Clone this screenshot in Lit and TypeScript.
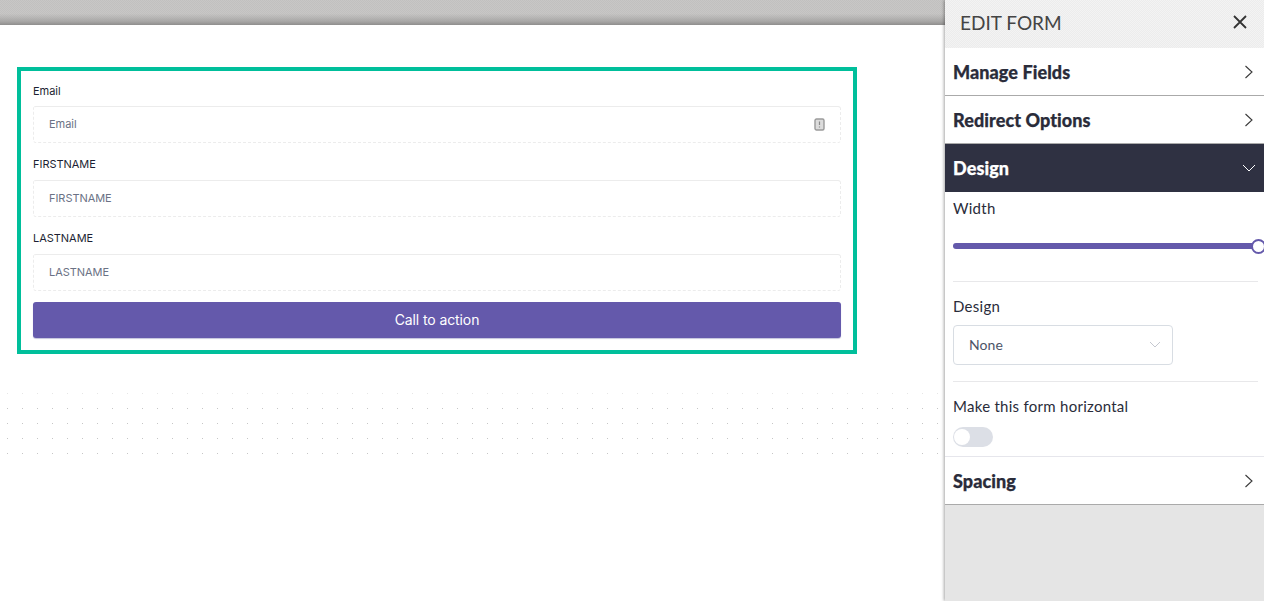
import { LitElement, html, css, svg } from "lit";
import { customElement } from "lit/decorators.js";

const chevronRight = html`<svg class="chev" width="10" height="14" viewBox="0 0 10 14"><path d="M1.5 1 L8 7 L1.5 13" fill="none" stroke="#3a3a3a" stroke-width="1.1"/></svg>`;

@customElement("app-root")
export class AppRoot extends LitElement {
  static styles = css`
    :host { display: block; width: 1264px; height: 601px; overflow: hidden; background: #fff; font-family: "Inter", "Liberation Sans", sans-serif; }
    .page { display: flex; height: 601px; }
    .main { width: 945px; flex: none; display: flex; flex-direction: column; }
    .topbar { height: 25px; flex: none; background: linear-gradient(180deg, rgba(197,196,195,0) 0, rgba(197,196,195,0) 55%, #a9a8a7 85%, #8f8e8d 100%), repeating-conic-gradient(#c8c7c6 0 25%, #c1c0bf 0 50%) 0 0 / 2px 2px; }
    .canvas { flex: 1; padding: 42px 0 0 17px; }
    .box { width: 840px; height: 287px; box-sizing: border-box; border: 4px solid #00bf9b; padding: 13px 12px 0; display: flex; flex-direction: column; }
    .label { font-size: 11px; line-height: 15px; height: 14px; flex: none; color: #1c1f33; letter-spacing: -0.03px; }
    .input { height: 37.4px; flex: none; box-sizing: border-box; margin-top: 9px; border: 1px dashed #ececec; border-top-style: solid; border-radius: 3px; padding: 0 15px 1px; display: flex; align-items: center; justify-content: space-between; font-size: 11px; color: #6b7285; letter-spacing: -0.05px; }
    .label:first-child + .input { margin-top: 8px; }
    .input + .label { margin-top: 13.4px; }
    .icon { margin-right: 0.5px; display: block; }
    .cta { margin-top: 11.5px; height: 36px; flex: none; box-sizing: border-box; padding-bottom: 2px; background: #6459ab; border-radius: 3px; box-shadow: 0 1px 1px #c3c3dc; color: #fff; font-size: 14px; letter-spacing: -0.1px; display: flex; align-items: center; justify-content: center; }
    .dots { display: block; margin: 37px 0 0 -17px; }

    .panel { width: 319px; flex: none; display: flex; flex-direction: column; background: #e5e5e5; box-shadow: -1px 0 3px rgba(0,0,0,0.35); font-family: "Lato", "Liberation Sans", sans-serif; color: #2a2c3a; position: relative; }
    .phead { height: 48px; flex: none; box-sizing: border-box; background: repeating-conic-gradient(#f3f3f3 0 25%, #ececec 0 50%) 0 0 / 2px 2px; display: flex; align-items: center; justify-content: space-between; padding: 0 16px 4px 15px; font-size: 19px; color: #444; }
    .row { height: 48px; flex: none; box-sizing: border-box; background: #fff; border-bottom: 1px solid #aaa; display: flex; align-items: center; justify-content: space-between; padding: 0 10px 0 8px; font-size: 18px; font-weight: 900; color: #2a2c3a; letter-spacing: 0.08px; -webkit-text-stroke: 0.25px currentColor; }
    .row.dark { background: #2f3142; color: #fff; border-bottom: none; padding-right: 8px; }
    .body { background: #fff; height: 265px; flex: none; box-sizing: border-box; padding: 0 6px 0 8px; display: flex; flex-direction: column; }
    .field { font-size: 15px; line-height: 17px; height: 18px; flex: none; color: #2a2c3a; letter-spacing: 0.27px; }
    .m8 { margin-top: 8px; }
    .m16 { margin-top: 16px; }
    .slider { margin-top: 25px; height: 6px; flex: none; background: #6459ab; border-radius: 3px; position: relative; margin-right: -6px; }
    .knob { position: absolute; right: -2px; top: -4.5px; width: 15px; height: 15px; box-sizing: border-box; border: 2px solid #6459ab; border-radius: 50%; background: #fff; }
    .hr { height: 1px; background: #e8e8ea; flex: none; }
    .hr.first { margin-top: 32px; }
    .select { margin-top: 9px; width: 220px; height: 40px; flex: none; box-sizing: border-box; border: 1px solid #d8dde3; border-radius: 4px; padding: 0 11px 1px 15px; display: flex; align-items: center; justify-content: space-between; font-size: 14px; color: #4d5468; letter-spacing: 0.1px; }
    .toggle { margin-top: 11px; width: 40px; height: 20px; border-radius: 10px; background: #dcdfe6; position: relative; flex: none; }
    .toggle::after { content: ""; position: absolute; left: 1px; top: 2px; width: 16px; height: 16px; border-radius: 50%; background: #fff; }
    .sectionhr { height: 1px; background: #e6e6ec; margin: 9px -6px 0 -8px; flex: none; }
  `;

  render() {
    return html`<div class="page">
      <div class="main">
        <div class="topbar"></div>
        <div class="canvas">
          <div class="box">
            <div class="label">Email</div>
            <div class="input"><span>Email</span>
              <svg class="icon" width="11" height="13" viewBox="0 0 11 13"><rect x="1" y="1" width="9" height="11" rx="1.5" fill="#dcdcdc" stroke="#9a9a9a" stroke-width="1.4"/><path d="M5.5 3.5v3.5M5.5 8.5v1" stroke="#8a8a8a" stroke-width="1.2"/></svg>
            </div>
            <div class="label">FIRSTNAME</div>
            <div class="input"><span>FIRSTNAME</span></div>
            <div class="label">LASTNAME</div>
            <div class="input"><span>LASTNAME</span></div>
            <div class="cta">Call to action</div>
          </div>
          <svg class="dots" width="944" height="70" viewBox="0 0 944 70">
            <defs>
              <pattern id="d" x="7" y="2" width="15" height="15" patternUnits="userSpaceOnUse"><rect width="1" height="1" fill="#c6c6c6"/></pattern>
              <pattern id="t" x="7" y="2" width="15" height="15" patternUnits="userSpaceOnUse"><rect width="1" height="1" fill="#e6e6e6"/></pattern>
            </defs>
            ${svg`<rect x="0" y="0" width="942" height="15" fill="url(#t)"/><rect x="0" y="15" width="942" height="55" fill="url(#d)"/>`}
          </svg>
        </div>
      </div>
      <div class="panel">
        <div class="phead"><span>EDIT FORM</span>
          <svg width="16" height="16" viewBox="0 0 16 16"><path d="M2 2L14 14M14 2L2 14" stroke="#333" stroke-width="1.8" fill="none"/></svg>
        </div>
        <div class="row">Manage Fields ${chevronRight}</div>
        <div class="row">Redirect Options ${chevronRight}</div>
        <div class="row dark">Design
          <svg width="14" height="8" viewBox="0 0 14 8"><path d="M1 1L7 7L13 1" fill="none" stroke="#fff" stroke-width="1"/></svg>
        </div>
        <div class="body">
          <div class="field m8">Width</div>
          <div class="slider"><div class="knob"></div></div>
          <div class="hr first"></div>
          <div class="field m16">Design</div>
          <div class="select"><span>None</span>
            <svg width="12" height="7" viewBox="0 0 12 7"><path d="M1 1L6 6L11 1" fill="none" stroke="#c5c8d0" stroke-width="1"/></svg>
          </div>
          <div class="hr m16"></div>
          <div class="field m16">Make this form horizontal</div>
          <div class="toggle"></div>
          <div class="sectionhr"></div>
        </div>
        <div class="row">Spacing ${chevronRight}</div>
      </div>
    </div>`;
  }
}
